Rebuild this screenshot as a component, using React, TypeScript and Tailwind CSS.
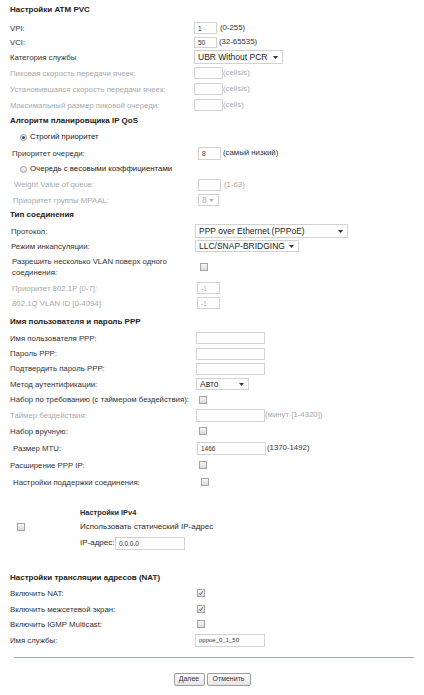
import React from "react";

const dark = "text-[#333]";
const gray = "text-[#a9a9a9]";

function Header({ children, cls = "" }: { children: React.ReactNode; cls?: string }) {
  return <div className={`flex items-center pl-[10px] text-[8px] font-bold text-[#222] ${cls}`}>{children}</div>;
}

type RowProps = {
  h: string;
  label: React.ReactNode;
  muted?: boolean;
  lw?: string;
  lp?: string;
  cls?: string;
  children?: React.ReactNode;
};

function Row({ h, label, muted, lw = "w-[194px]", lp = "pl-[10px]", cls = "", children }: RowProps) {
  return (
    <div className={`flex items-center ${h} ${cls}`}>
      <div className={`${lw} ${lp} shrink-0 text-[7.8px] leading-[11px] ${muted ? gray : dark}`}>{label}</div>
      <div className="flex items-center text-[7.8px] whitespace-nowrap">{children}</div>
    </div>
  );
}

function Box({ w, h = "h-[12px]", value = "", muted, size = "text-[6.5px]" }: { w: string; h?: string; value?: string; muted?: boolean; size?: string }) {
  return (
    <input
      readOnly
      value={value}
      className={`${w} ${h} ${size} shrink-0 border border-[#d2d2d2] bg-white px-[3px] outline-none ${muted ? "text-[#b0b0b0]" : "text-[#333]"}`}
    />
  );
}

function Arrow({ muted }: { muted?: boolean }) {
  return (
    <svg width="5" height="3" viewBox="0 0 5 3" className="shrink-0">
      <polygon points="0,0 5,0 2.5,3" fill={muted ? "#b5b5b5" : "#333"} />
    </svg>
  );
}

function Select({ w, h = "h-[13px]", value, muted }: { w: string; h?: string; value: string; muted?: boolean }) {
  return (
    <div
      className={`${w} ${h} flex items-center justify-between border border-[#d2d2d2] bg-white pl-[3px] pr-[4px] text-[8.5px] leading-none ${muted ? "text-[#b0b0b0]" : "text-[#222]"}`}
    >
      <span className="whitespace-nowrap">{value}</span>
      <Arrow muted={muted} />
    </div>
  );
}

function Check({ on }: { on?: boolean }) {
  return (
    <div className="w-[8px] h-[8px] flex items-center justify-center border border-[#a5a5a5] bg-linear-to-b from-[#f7f7f7] to-[#dadada]">
      {on && (
        <svg width="6" height="6" viewBox="0 0 6 6">
          <path d="M1.2 3.4 L2.4 4.8 L4.9 1.1" fill="none" stroke="#46648a" strokeWidth="1" />
        </svg>
      )}
    </div>
  );
}

function Radio({ on }: { on?: boolean }) {
  return (
    <div className="w-[7px] h-[7px] rounded-full flex items-center justify-center border border-[#9c9c9c] bg-linear-to-b from-[#fbfbfb] to-[#dcdcdc]">
      {on && <div className="w-[3px] h-[3px] rounded-full bg-[#3c5676]" />}
    </div>
  );
}

function Button({ children, w }: { children: React.ReactNode; w: string }) {
  return (
    <div
      className={`${w} h-[13px] flex items-center justify-center rounded-[2px] border border-[#9d9d9d] bg-linear-to-b from-[#ffffff] to-[#e4e4e4] text-[7px] text-[#333]`}
    >
      {children}
    </div>
  );
}

export default function App() {
  return (
    <div className="w-[424px] h-[695px] bg-white pt-[4px] font-['Liberation_Sans',Arial,sans-serif]">
      {/* ATM PVC */}
      <Header cls="h-[12px]">Настройки ATM PVC</Header>
      <Row h="h-[14px]" cls="mt-[5px]" label="VPI:">
        <Box w="w-[23px]" value="1" />
        <span className={`ml-[3px] ${dark}`}>(0-255)</span>
      </Row>
      <Row h="h-[14px]" label="VCI:">
        <Box w="w-[23px]" h="h-[11px]" value="50" />
        <span className={`ml-[2px] ${dark}`}>(32-65535)</span>
      </Row>
      <Row h="h-[16px]" label="Категория службы">
        <Select w="w-[89px]" h="h-[14px]" value="UBR Without PCR" />
      </Row>
      <Row h="h-[16px]" muted label="Пиковая скорость передачи ячеек:">
        <Box w="w-[29px]" />
        <span className={gray}>(cells/s)</span>
      </Row>
      <Row h="h-[16px]" muted label="Установившаяся скорость передачи ячеек:">
        <Box w="w-[29px]" />
        <span className={gray}>(cells/s)</span>
      </Row>
      <Row h="h-[16px]" muted label="Максимальный размер пиковой очереди:">
        <Box w="w-[29px]" />
        <span className={gray}>(cells)</span>
      </Row>

      {/* QoS */}
      <Header cls="h-[16px]">Алгоритм планировщика IP QoS</Header>
      <div className="flex items-center h-[16px] pl-[20px] gap-[3px] text-[7.8px] text-[#222]">
        <Radio on />
        <span>Строгий приоритет</span>
      </div>
      <Row h="h-[16px]" lw="w-[198px]" lp="pl-[12px]" label="Приоритет очереди:">
        <Box w="w-[23px]" h="h-[13px]" value="8" />
        <span className={`ml-[2px] ${dark}`}>(самый низкий)</span>
      </Row>
      <div className="flex items-center h-[16px] pl-[20px] gap-[3px] text-[7.8px] text-[#222]">
        <Radio />
        <span>Очередь с весовыми коэффициентами</span>
      </div>
      <Row h="h-[15px]" lw="w-[198px]" lp="pl-[14px]" muted label="Weight Value of queue:">
        <Box w="w-[23px]" />
        <span className={`ml-[3px] ${gray}`}>(1-63)</span>
      </Row>
      <Row h="h-[16px]" lw="w-[198px]" lp="pl-[13px]" muted label="Приоритет группы MPAAL:">
        <Select w="w-[21px]" h="h-[12px]" value="8" muted />
      </Row>

      {/* Connection type */}
      <Header cls="h-[14px] pl-[9px]">Тип соединения</Header>
      <Row h="h-[16px]" cls="mt-[1px]" lw="w-[195px]" lp="pl-[11px]" label="Протокол:">
        <Select w="w-[153px]" h="h-[14px]" value="PPP over Ethernet (PPPoE)" />
      </Row>
      <Row h="h-[14px]" lw="w-[195px]" lp="pl-[11px]" label="Режим инкапсуляции:">
        <Select w="w-[104px]" h="h-[12px]" value="LLC/SNAP-BRIDGING" />
      </Row>
      <Row
        h="h-[28px]"
        lw="w-[200px]"
        lp="pl-[12px]"
        label={
          <>
            Разрешить несколько VLAN поверх одного
            <br />
            соединения:
          </>
        }
      >
        <Check />
      </Row>
      <Row h="h-[14px]" lw="w-[197px]" lp="pl-[12px]" muted label="Приоритет 802.1P [0-7]:">
        <Box w="w-[23px]" value="-1" muted />
      </Row>
      <Row h="h-[16px]" lw="w-[197px]" lp="pl-[12px]" muted label="802.1Q VLAN ID [0-4094]:">
        <Box w="w-[23px]" value="-1" muted />
      </Row>

      {/* PPP */}
      <Header cls="h-[16px] mt-[3px] pl-[9px]">Имя пользователя и пароль PPP</Header>
      <Row h="h-[16px]" lw="w-[196px]" label="Имя пользователя PPP:">
        <Box w="w-[69px]" />
      </Row>
      <Row h="h-[15px]" lw="w-[196px]" label="Пароль PPP:">
        <Box w="w-[69px]" />
      </Row>
      <Row h="h-[15px]" lw="w-[196px]" label="Подтвердить пароль PPP:">
        <Box w="w-[69px]" />
      </Row>
      <Row h="h-[16px]" lw="w-[196px]" label="Метод аутентификации:">
        <Select w="w-[53px]" h="h-[12px]" value="Авто" />
      </Row>
      <Row h="h-[15px]" lw="w-[199px]" label="Набор по требованию (с таймером бездействия):">
        <Check />
      </Row>
      <Row h="h-[16px]" lw="w-[196px]" muted label="Таймер бездействия:">
        <Box w="w-[69px]" h="h-[13px]" />
        <span className={gray}>(минут [1-4320])</span>
      </Row>
      <Row h="h-[16px]" lw="w-[199px]" label="Набор вручную:">
        <Check />
      </Row>
      <Row h="h-[18px]" lw="w-[197px]" lp="pl-[13px]" label="Размер MTU:">
        <Box w="w-[69px]" h="h-[13px]" value="1466" />
        <span className={`ml-[1px] ${dark}`}>(1370-1492)</span>
      </Row>
      <Row h="h-[16px]" lw="w-[199px]" label="Расширение PPP IP:">
        <Check />
      </Row>
      <Row h="h-[18px]" lw="w-[201px]" lp="pl-[13px]" label="Настройки поддержки соединения:">
        <Check />
      </Row>

      {/* IPv4 */}
      <div className="mt-[15px] text-[8px] text-[#2a2a2a] whitespace-nowrap">
        <div className="flex items-center h-[14px]">
          <div className="w-[80px] shrink-0" />
          <span className="font-bold text-[7.4px]">Настройки IPv4</span>
        </div>
        <div className="flex items-center h-[14px]">
          <div className="w-[80px] shrink-0 pl-[17px]">
            <Check />
          </div>
          <span>Использовать статический IP-адрес</span>
        </div>
        <div className="flex items-center h-[18px]">
          <div className="w-[80px] shrink-0" />
          <span className="w-[35px] shrink-0">IP-адрес:</span>
          <Box w="w-[70px]" h="h-[13px]" value="0.0.0.0" />
        </div>
      </div>

      {/* NAT */}
      <Header cls="h-[14px] mt-[19px]">Настройки трансляции адресов (NAT)</Header>
      <Row h="h-[16px]" lw="w-[197px]" label="Включить NAT:">
        <Check on />
      </Row>
      <Row h="h-[16px]" lw="w-[197px]" label="Включить межсетевой экран:">
        <Check on />
      </Row>
      <Row h="h-[14px]" lw="w-[197px]" label="Включить IGMP Multicast:">
        <Check />
      </Row>
      <Row h="h-[18px]" lw="w-[195px]" label="Имя службы:">
        <Box w="w-[70px]" h="h-[13px]" value="pppoe_0_1_50" size="text-[6px]" />
      </Row>

      <div className="mt-[8px] ml-[14px] w-[400px] h-px bg-[#8eaecb]" />

      <div className="mt-[15px] flex justify-center gap-[2px]">
        <Button w="w-[31px]">Далее</Button>
        <Button w="w-[44px]">Отменить</Button>
      </div>
    </div>
  );
}
